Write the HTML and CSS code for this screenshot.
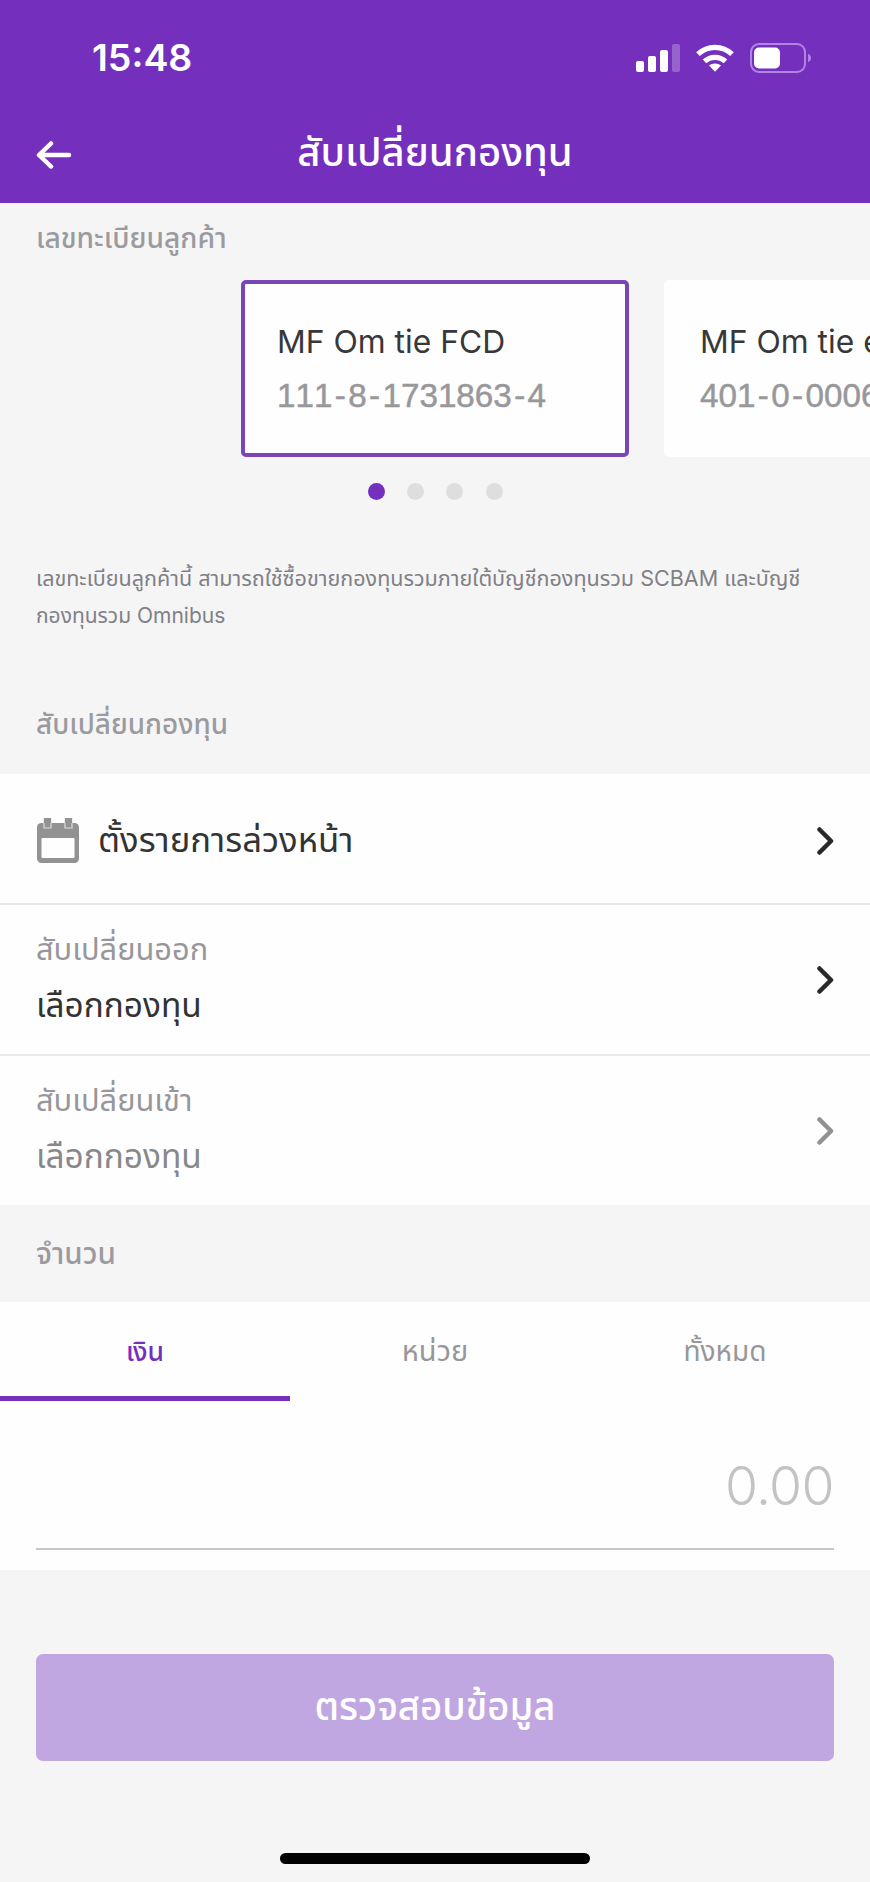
FILE: index.html
```html
<!DOCTYPE html>
<html lang="th">
<head>
<meta charset="utf-8">
<title>สับเปลี่ยนกองทุน</title>
<link rel="stylesheet" href="styles.css">
</head>
<body>
<main class="screen">
  <header class="header">
    <div class="status">
      <span class="time">15:48</span>
      <div class="status-icons">
        <svg width="44" height="28" viewBox="0 0 44 28" fill="#fff"><rect x="0" y="17" width="8" height="11" rx="2"/><rect x="12" y="12" width="8" height="16" rx="2"/><rect x="24" y="6" width="8" height="22" rx="2"/><rect x="36" y="0" width="8" height="28" rx="2" opacity=".25"/></svg>
        <svg class="wifi" width="38" height="28" viewBox="0 0 38 28" fill="none" stroke="#fff" stroke-width="5.2"><path d="M2 10.2a24.5 24.5 0 0 1 34 0"/><path d="M8.5 17.4a15.5 15.5 0 0 1 21 0"/><path d="M19 19.5c-2.300 0-4.400.8-6 2.100l6 6.200 6-6.200c-1.600-1.300-3.700-2.100-6-2.100z" fill="#fff" stroke="none"/></svg>
        <svg class="battery" width="62" height="30" viewBox="0 0 62 30"><rect x="1" y="1" width="54" height="28" rx="8" fill="none" stroke="#b184e4" stroke-width="2"/><rect x="4" y="4.500" width="26" height="21" rx="5" fill="#fff"/><path d="M58 11c4 1 4 7 0 8z" fill="#b184e4"/></svg>
      </div>
    </div>
    <div class="nav">
      <svg class="back" width="37" height="28" viewBox="0 0 37 28" fill="none" stroke="#fff" stroke-width="4.500" stroke-linecap="round" stroke-linejoin="round"><path d="M33 14H3M15 2.500L3 14l12 11.500"/></svg>
      <h1 class="title">สับเปลี่ยนกองทุน</h1>
    </div>
  </header>

  <section class="accounts">
    <h2 class="label label-account">เลขทะเบียนลูกค้า</h2>
    <div class="carousel">
      <article class="card card-active"><p class="card-name">MF Om tie FCD</p><p class="card-number">111<span class="dash">-</span>8<span class="dash">-</span>1731863<span class="dash">-</span>4</p></article>
      <article class="card"><p class="card-name">MF Om tie e</p><p class="card-number">401<span class="dash">-</span>0<span class="dash">-</span>0006</p></article>
    </div>
    <div class="dots"><i class="dot dot-on"></i><i class="dot"></i><i class="dot"></i><i class="dot"></i></div>
    <p class="note"><span class="note-first">เลขทะเบียนลูกค้านี้ สามารถใช้ซื้อขายกองทุนรวมภายใต้บัญชีกองทุนรวม SCBAM และบัญชี</span><br><span class="note-second">กองทุนรวม Omnibus</span></p>
    <h2 class="label label-switch">สับเปลี่ยนกองทุน</h2>
  </section>

  <section class="list">
    <div class="row row-schedule">
      <svg class="calendar" width="42" height="45" viewBox="0 0 42 45"><rect x="0" y="5" width="42" height="40" rx="4.500" fill="#929292"/><rect x="4.500" y="20" width="33" height="20" rx="1" fill="#fefefe"/><path d="M7 0h7v10H7zM28 0h7v10h-7z" fill="#929292" stroke="#ddd" stroke-width="1.200"/><path d="M7 0h7v5H7zM28 0h7v5h-7z" fill="#929292"/></svg>
      <span class="schedule">ตั้งรายการล่วงหน้า</span>
      <svg class="chevron" width="18" height="30" viewBox="0 0 18 30"><path d="M3.500 3.500L15 15 3.500 26.500"/></svg>
    </div>
    <div class="row">
      <div class="field"><span class="caption">สับเปลี่ยนออก</span><span class="value">เลือกกองทุน</span></div>
      <svg class="chevron" width="18" height="30" viewBox="0 0 18 30"><path d="M3.500 3.500L15 15 3.500 26.500"/></svg>
    </div>
    <div class="row row-disabled">
      <div class="field"><span class="caption">สับเปลี่ยนเข้า</span><span class="value">เลือกกองทุน</span></div>
      <svg class="chevron" width="18" height="30" viewBox="0 0 18 30"><path d="M3.500 3.500L15 15 3.500 26.500"/></svg>
    </div>
  </section>

  <h2 class="label label-amount">จำนวน</h2>

  <section class="amount">
    <div class="tabs"><span class="tab tab-on">เงิน</span><span class="tab tab-unit">หน่วย</span><span class="tab">ทั้งหมด</span></div>
    <div class="input">0.00</div>
  </section>

  <footer class="footer">
    <button class="submit">ตรวจสอบข้อมูล</button>
    <div class="home"></div>
  </footer>
</main>
</body>
</html>
```

FILE: styles.css
```css
* { box-sizing: border-box; margin: 0; padding: 0; }
body { background: #f5f5f6; }
.screen {
  width: 870px; height: 1882px; overflow: hidden;
  display: flex; flex-direction: column;
  background: #f5f5f6; color: #333;
  font-family: Inter, "Noto Sans Thai", "Noto Sans", sans-serif;
  white-space: nowrap;
}
.header { height: 203px; flex: none; background: #752fbd; color: #fff; }
.status { height: 116px; padding: 0 58px 0 92px; display: flex; justify-content: space-between; align-items: center; }
.time { font-size: 37.5px; font-weight: 600; line-height: 44px; }
.status-icons { display: flex; align-items: center; }
.wifi { margin-left: 16px; }
.battery { margin-left: 16px; }
.nav { height: 87px; padding: 0 36px; display: grid; grid-template-columns: 37px 1fr 37px; align-items: center; }
.back { margin-top: -9px; }
.title { font-size: 40px; line-height: 50px; font-weight: 500; text-align: center; margin-top: -15px; }

.accounts { height: 571px; flex: none; padding-left: 36px; }
.label { font-size: 28.200px; font-weight: 500; line-height: 36px; color: #9b9b9f; }
.label-account { padding-top: 17px; }
.carousel { margin-top: 24px; padding-left: 205px; display: flex; gap: 35px; }
.card { flex: none; width: 388px; height: 177px; padding: 37px 32px; border-radius: 5px; background: #fefefe; border: 4px solid #fefefe; }
.card-active { border-color: #7c45b5; }
.card-name { font-size: 31.800px; line-height: 42px; color: #38383a; }
.card-number { font-family: "Liberation Sans", Arial, sans-serif; font-size: 33.200px; line-height: 42px; margin-top: 12px; font-kerning: none; color: #98989b; -webkit-text-stroke: 0.500px #98989b; }
.dash { margin: 0 2.400px; }
.dots { margin: 26px 0 0 331.500px; display: flex; gap: 22.400px; }
.dot { width: 17px; height: 17px; border-radius: 50%; background: #dedede; }
.dot-on { background: #752fbd; }
.note { margin-top: 60px; font-size: 21px; line-height: 37px; color: #808086; }
.note-first { font-size: 21.560px; }
.label-switch { margin-top: 72px; font-size: 27.900px; }

.list { flex: none; background: #fefefe; }
.row { height: 151px; padding: 0 36px; display: flex; align-items: center; border-bottom: 2px solid #e9e9eb; }
.row-schedule { height: 131px; padding: 4px 36px 0; }
.row-disabled { height: 149px; border-bottom: 0; }
.calendar { margin: 0 19px 0 1px; }
.schedule { font-size: 34.700px; line-height: 44px; margin-top: -3px; }
.field { display: flex; flex-direction: column; gap: 12px; margin-top: -6px; }
.caption { font-size: 30.800px; line-height: 44px; color: #97979b; }
.value { font-size: 33.400px; line-height: 44px; }
.row-disabled .value { color: #88888b; }
.chevron { margin-left: auto; fill: none; stroke: #29292b; stroke-width: 4.500; stroke-linecap: round; stroke-linejoin: round; }
.row-disabled .chevron { stroke: #919193; }

.label-amount { height: 97px; flex: none; padding: 30px 36px 0; font-size: 29.600px; }
.amount { height: 268px; flex: none; background: #fefefe; }
.tabs { height: 99px; display: grid; grid-template-columns: repeat(3, 1fr); }
.tab { padding-top: 29px; font-size: 28px; line-height: 40px; font-weight: 450; text-align: center; color: #97979b; }
.tab-unit { font-size: 29px; }
.tab-on { font-size: 26.500px; font-weight: 500; color: #752fbd; border-bottom: 5px solid #752fbd; }
.input { height: 149px; margin: 0 36px; padding-top: 53px; border-bottom: 2px solid #c6c6c8; font-size: 53.500px; line-height: 64px; font-weight: 300; letter-spacing: -0.600px; text-align: right; color: #c3c3c5; }
.footer { flex: 1; padding: 84px 36px 0; display: flex; flex-direction: column; align-items: center; }
.submit { width: 798px; height: 107px; padding-bottom: 3px; border: 0; border-radius: 7px; background: #c1a7e1; color: #fff; font: 500 38.300px/50px Inter, "Noto Sans Thai", "Noto Sans", sans-serif; }
.home { margin-top: 92px; width: 310px; height: 11px; border-radius: 6px; background: #000; }
```
